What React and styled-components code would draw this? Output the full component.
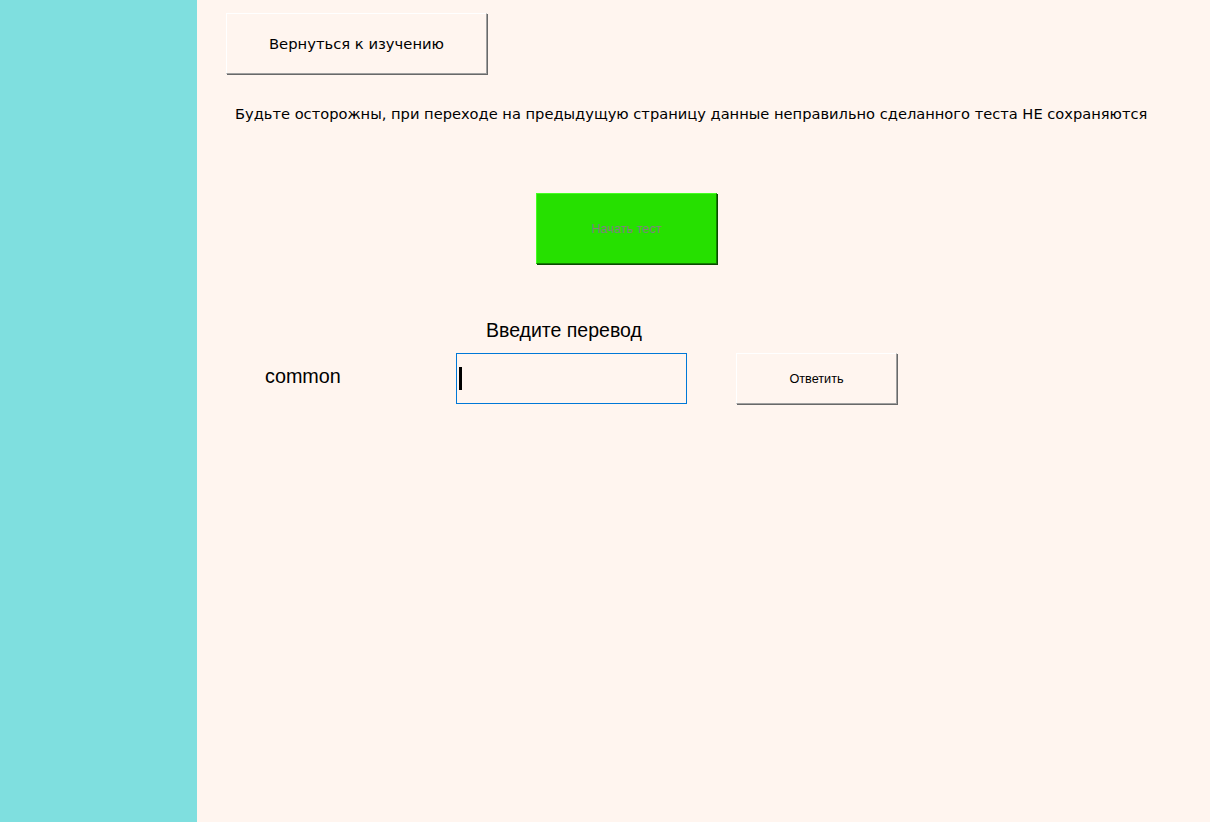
import React from 'react';
import styled, { createGlobalStyle } from 'styled-components';

const Global = createGlobalStyle`
  html, body {
    margin: 0;
    background: #ffffff;
  }
  body {
    font-family: "Liberation Sans", Arial, sans-serif;
  }
`;

const Frame = styled.div`
  display: flex;
  width: 1210px;
  height: 822px;
`;

const Sidebar = styled.div`
  width: 197px;
  flex-shrink: 0;
  background: #7fdfdf;
`;

const Main = styled.div`
  flex: 1;
  background: #fff5ef;
  padding-top: 13px;
  display: flex;
  flex-direction: column;
  align-items: flex-start;
`;

const FormButton = styled.button`
  width: ${(p) => p.w}px;
  height: ${(p) => p.h}px;
  margin-left: ${(p) => p.left || 0}px;
  background: #fff5ef;
  border: 1px solid;
  border-color: #ffffff #a0a0a0 #a0a0a0 #ffffff;
  box-shadow: 1px 1px 0 #696969;
  font-family: ${(p) => (p.tahoma ? '"DejaVu Sans", Verdana, sans-serif' : '"Liberation Sans", Arial, sans-serif')};
  font-size: ${(p) => p.size}px;
  color: #000;
  padding: 0;
`;

const StartButton = styled.button`
  width: 181px;
  height: 71px;
  margin-left: 339px;
  margin-top: 70px;
  background: #26e000;
  border: 1px solid;
  border-color: #44ff22 #128000 #128000 #44ff22;
  box-shadow: 1px 1px 0 #0a4a00;
  font-family: "Liberation Sans", Arial, sans-serif;
  font-size: 12.7px;
  color: #808080;
  padding: 0;
`;

const Warning = styled.p`
  margin: 31px 0 0 38px;
  font-family: "DejaVu Sans", Verdana, sans-serif;
  font-size: 14.65px;
  line-height: 18px;
  color: #000;
  white-space: nowrap;
`;

const Prompt = styled.div`
  margin: 55px 0 0 289px;
  font-size: 19.5px;
  line-height: 22px;
  color: #000;
`;

const AnswerRow = styled.div`
  display: flex;
  align-items: center;
  margin-top: 12px;
  height: 51px;
`;

const Word = styled.div`
  width: 191px;
  padding-left: 68px;
  font-size: 19.8px;
  color: #000;
  margin-top: -5px;
`;

const Input = styled.div`
  box-sizing: border-box;
  width: 231px;
  height: 51px;
  border: 1px solid #0078d7;
  display: flex;
  align-items: center;
  padding-left: 2px;
  margin-right: 49px;
`;

const Caret = styled.span`
  width: 3px;
  height: 23px;
  background: #000;
`;

export default function App() {
  return (
    <>
      <Global />
      <Frame>
        <Sidebar />
        <Main>
          <FormButton w={261} h={61} left={29} size={14.75} tahoma>
            Вернуться к изучению
          </FormButton>
          <Warning>
            Будьте осторожны, при переходе на предыдущую страницу данные неправильно сделанного теста НЕ сохраняются
          </Warning>
          <StartButton>Начать тест</StartButton>
          <Prompt>Введите перевод</Prompt>
          <AnswerRow>
            <Word>common</Word>
            <Input>
              <Caret />
            </Input>
            <FormButton w={161} h={51} size={12.7}>
              Ответить
            </FormButton>
          </AnswerRow>
        </Main>
      </Frame>
    </>
  );
}
